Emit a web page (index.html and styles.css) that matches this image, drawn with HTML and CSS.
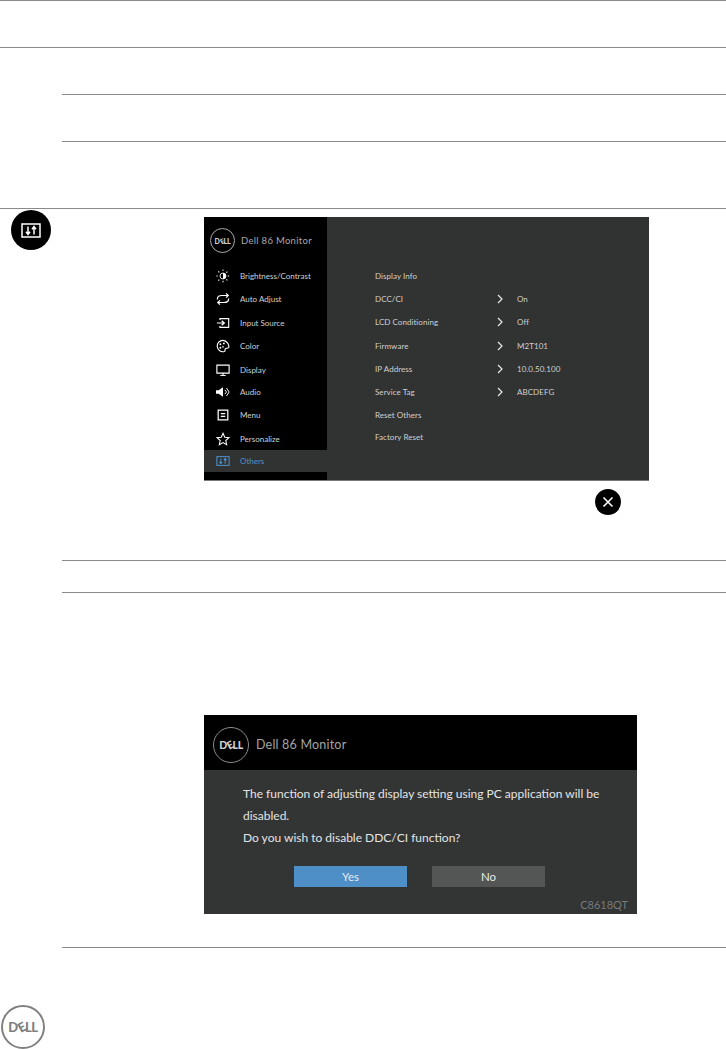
FILE: index.html
```html
<!DOCTYPE html>
<html lang="en">

<head>
    <meta charset="UTF-8">
    <meta name="viewport" content="width=device-width, initial-scale=1.0">
    <title>Dell 86 Monitor</title>
    <link rel="stylesheet" href="styles.css">
</head>

<body>
    <div class="row full h46"></div>
    <div class="row full h46"></div>
    <div class="row inset h46"></div>
    <div class="row inset h66"></div>

    <div class="row full others">
        <div class="badge">
            <svg width="20" height="15" viewBox="0 0 20 15">
                <rect x="1" y="1" width="18" height="13" fill="none" stroke="#fff" stroke-width="1.500" />
                <path d="M7 3.500v8M5 8.800l2 2.700 2-2.700M13 11.500v-8M11 6.200l2-2.700 2 2.700" fill="none" stroke="#fff" stroke-width="1.500" />
            </svg>
        </div>
        <div class="osd-wrap">
            <div class="osd">
                <div class="side">
                    <div class="osd-head">
                        <div class="ring small-ring"><span class="logo-text">D<i>E</i>LL</span></div>
                        <span class="osd-title">Dell 86 Monitor</span>
                    </div>
                    <div class="menu">
                        <div class="item">
                            <svg class="ico" viewBox="0 0 16 16"><circle cx="8" cy="8" r="3.400" fill="none" stroke="#fff" /><path d="M8 4.600a3.400 3.400 0 0 1 0 6.800z" fill="#fff" /><path d="M8 .5v2M8 13.500v2M.5 8h2M13.500 8h2M2.700 2.700l1.400 1.400M11.900 11.900l1.400 1.400M2.700 13.300l1.400-1.400M11.900 4.100l1.400-1.400" stroke="#fff" stroke-width="1.200" stroke-dasharray="1.500 .8" /></svg>
                            Brightness/Contrast
                        </div>
                        <div class="item">
                            <svg class="ico" viewBox="0 0 16 16"><path d="M1.500 8.500C1.500 5 4 4 6.500 4H14M11.500 1.500L14 4l-2.500 2.500M14.500 7.500c0 3.500-2.500 4.500-5 4.500H2M4.500 9.500L2 12l2.500 2.500" fill="none" stroke="#fff" stroke-width="1.400" /></svg>
                            Auto Adjust
                        </div>
                        <div class="item">
                            <svg class="ico" viewBox="0 0 16 16"><path d="M4.500 4.500V3h10v10h-10v-1.500" fill="none" stroke="#fff" stroke-width="1.300" /><path d="M1 8h8M6.500 5.500L9.500 8l-3 2.500" fill="none" stroke="#fff" stroke-width="1.400" /></svg>
                            Input Source
                        </div>
                        <div class="item">
                            <svg class="ico" viewBox="0 0 16 16"><path d="M8 1.500a6.500 6.500 0 1 0 1.500 12.800c1.500-.5.500-2 1-3s3-.3 4-1.500c1-2.500-2-8.300-6.500-8.300z" fill="none" stroke="#fff" stroke-width="1.300" /><circle cx="5" cy="6" r="1.100" fill="#fff" /><circle cx="9" cy="5" r="1.100" fill="#fff" /><circle cx="5" cy="10" r="1.100" fill="#fff" /><circle cx="8" cy="9" r=".9" fill="#fff" /></svg>
                            Color
                        </div>
                        <div class="item">
                            <svg class="ico" viewBox="0 0 16 16"><path d="M1 2.500h14v9H1zM5 14.300h6M8 11.500v2.800" fill="none" stroke="#fff" stroke-width="1.300" /></svg>
                            Display
                        </div>
                        <div class="item">
                            <svg class="ico" viewBox="0 0 16 16"><path d="M0 6h3l5-3.500v11L3 10H0z" fill="#fff" /><path d="M10 5.500l2 2.500-2 2.500M12 3.500L15 8l-3 4.500" fill="none" stroke="#fff" stroke-width="1.100" /></svg>
                            Audio
                        </div>
                        <div class="item">
                            <svg class="ico" viewBox="0 0 16 16"><path d="M2.500 2.500h11v11h-11zM5.500 6.500h5M5.500 9.500h5" fill="none" stroke="#fff" stroke-width="1.400" /></svg>
                            Menu
                        </div>
                        <div class="item">
                            <svg class="ico" viewBox="0 0 16 16"><path d="M8 1.500l2 4.500 4.800.5-3.600 3.200 1 4.800L8 12.100l-4.200 2.400 1-4.800L1.200 6.500 6 6z" fill="none" stroke="#fff" stroke-width="1.200" /></svg>
                            Personalize
                        </div>
                        <div class="item current">
                            <svg class="ico" viewBox="0 0 16 16"><rect x="1" y="3" width="14" height="10" fill="none" stroke="#4f8fc8" stroke-width="1.200" /><path d="M5.500 5v6M4 9l1.500 2L7 9M10.500 11V5M9 7l1.500-2L12 7" fill="none" stroke="#4f8fc8" stroke-width="1.200" /></svg>
                            Others
                        </div>
                    </div>
                </div>
                <div class="panel">
                    <div class="opt"><span class="opt-name">Display Info</span></div>
                    <div class="opt"><span class="opt-name">DCC/CI</span><svg class="chev" viewBox="0 0 6 10"><path d="M1 1l4 4-4 4" /></svg><span>On</span></div>
                    <div class="opt"><span class="opt-name">LCD Conditioning</span><svg class="chev" viewBox="0 0 6 10"><path d="M1 1l4 4-4 4" /></svg><span>Off</span></div>
                    <div class="opt"><span class="opt-name">Firmware</span><svg class="chev" viewBox="0 0 6 10"><path d="M1 1l4 4-4 4" /></svg><span>M2T101</span></div>
                    <div class="opt"><span class="opt-name">IP Address</span><svg class="chev" viewBox="0 0 6 10"><path d="M1 1l4 4-4 4" /></svg><span>10.0.50.100</span></div>
                    <div class="opt"><span class="opt-name">Service Tag</span><svg class="chev" viewBox="0 0 6 10"><path d="M1 1l4 4-4 4" /></svg><span>ABCDEFG</span></div>
                    <div class="opt"><span class="opt-name">Reset Others</span></div>
                    <div class="opt"><span class="opt-name">Factory Reset</span></div>
                </div>
            </div>
            <div class="close">
                <svg width="12" height="12" viewBox="0 0 12 12"><path d="M1.500 1.500l9 9M10.500 1.500l-9 9" stroke="#fff" stroke-width="1.600" /></svg>
            </div>
        </div>
    </div>

    <div class="row inset h31"></div>

    <div class="row inset dialog-row">
        <div class="dialog">
            <div class="dialog-head">
                <div class="ring mid-ring"><span class="logo-text">D<i>E</i>LL</span></div>
                <span class="dialog-title">Dell 86 Monitor</span>
            </div>
            <div class="dialog-body">
                <p class="msg">The function of adjusting display setting using PC application will be<br>disabled.<br>Do you wish to disable DDC/CI function?</p>
                <div class="btns">
                    <button class="btn yes">Yes</button>
                    <button class="btn no">No</button>
                </div>
                <div class="model">C8618QT</div>
            </div>
        </div>
    </div>

    <div class="row inset"></div>

    <div class="foot">
        <div class="ring foot-ring"><span class="logo-text">D<i>E</i>LL</span></div>
    </div>
</body>

</html>
```

FILE: styles.css
```css
* {
    margin: 0;
    padding: 0;
    box-sizing: border-box;
    font-family: Lato, "Liberation Sans", sans-serif;
}

body {
    width: 726px;
    height: 1049px;
    overflow: hidden;
    background: white;
}

.row {
    border-top: 1px solid #8a8a8a;
}

.inset {
    margin-left: 62px;
}

.h46 {
    height: 47px;
}

.h66 {
    height: 67px;
}

.h31 {
    height: 32px;
}

/* others section */
.others {
    height: 352px;
    display: flex;
    align-items: flex-start;
}

.badge {
    width: 40px;
    height: 40px;
    margin-left: 11px;
    margin-top: 1px;
    border-radius: 50%;
    background: black;
    display: flex;
    align-items: center;
    justify-content: center;
}

.osd-wrap {
    margin-left: 153px;
    margin-top: 8px;
    width: 445px;
}

.osd {
    height: 264px;
    display: flex;
    background: #313333;
    border-bottom: 1px solid #77797a;
}

.side {
    width: 123px;
    background: black;
    color: #d0d0d0;
    font-size: 8px;
}

.osd-head {
    height: 47px;
    display: flex;
    align-items: center;
    padding-left: 6px;
    gap: 6px;
}

.ring {
    border-radius: 50%;
    display: flex;
    align-items: center;
    justify-content: center;
}

.logo-text {
    font-weight: 900;
    letter-spacing: -0.03em;
}

.logo-text i {
    display: inline-block;
    font-style: normal;
    transform: rotate(-28deg);
}

.small-ring {
    width: 25px;
    height: 25px;
    border: 1px solid #a9a9a9;
    color: #d0d0d0;
    font-size: 7px;
}

.osd-title {
    font-size: 9.500px;
    color: #a8a8a8;
    letter-spacing: 0.3px;
}

.menu {
    display: grid;
    grid-template-rows: 23px 24px 23px 24px 23px 22px 24px 23px 22px;
}

.item {
    display: flex;
    align-items: center;
    padding-left: 12px;
    gap: 10px;
    white-space: nowrap;
}

.ico {
    width: 14px;
    height: 14px;
    flex: none;
}

.current {
    background: #313333;
    color: #4f8fc8;
}

.panel {
    flex: 1;
    padding-top: 47px;
    padding-left: 48px;
    color: #cfcfcf;
    font-size: 8px;
    letter-spacing: 0.05px;
    display: grid;
    grid-template-rows: 23px 23px 24px 23px 24px 22px 23px 22px;
    align-content: start;
}

.opt {
    display: flex;
    align-items: center;
    white-space: nowrap;
}

.opt-name {
    width: 122px;
}

.chev {
    width: 6px;
    height: 10px;
    margin-right: 14px;
    fill: none;
    stroke: #e8e8e8;
    stroke-width: 1.200;
}

.close {
    width: 26px;
    height: 26px;
    margin-top: 8px;
    margin-left: 391px;
    border-radius: 50%;
    background: black;
    display: flex;
    align-items: center;
    justify-content: center;
}

/* ddc/ci dialog */
.dialog {
    width: 433px;
    height: 199px;
    background: #333434;
}

.dialog-row {
    height: 355px;
    padding-top: 122px;
    padding-left: 142px;
}

.dialog-head {
    height: 55px;
    background: black;
    display: flex;
    align-items: center;
    padding-left: 9px;
    padding-top: 4px;
    gap: 7px;
}

.mid-ring {
    width: 36px;
    height: 36px;
    border: 1.500px solid #8d8d8d;
    color: #cfcfcf;
    font-size: 10.500px;
}

.dialog-title {
    font-size: 12.500px;
    color: #a4a4a4;
    letter-spacing: 0.2px;
}

.dialog-body {
    padding-top: 13px;
    padding-left: 39px;
    color: #e4e4e4;
}

.msg {
    font-size: 12px;
    line-height: 22px;
    white-space: nowrap;
}

.btns {
    display: flex;
    gap: 25px;
    margin-top: 17px;
    margin-left: 51px;
}

.btn {
    width: 113px;
    height: 21px;
    border: none;
    color: #e8e8e8;
    font-size: 11.500px;
}

.yes {
    background: #4f8fc8;
}

.no {
    background: #545656;
}

.model {
    margin-top: 11px;
    margin-right: 9px;
    text-align: right;
    color: #777979;
    font-size: 11px;
}

/* page footer */
.foot {
    padding-top: 57px;
    padding-left: 1px;
}

.foot-ring {
    width: 44px;
    height: 44px;
    border: 2.500px solid #808080;
    color: #808080;
    font-size: 13px;
}
```
